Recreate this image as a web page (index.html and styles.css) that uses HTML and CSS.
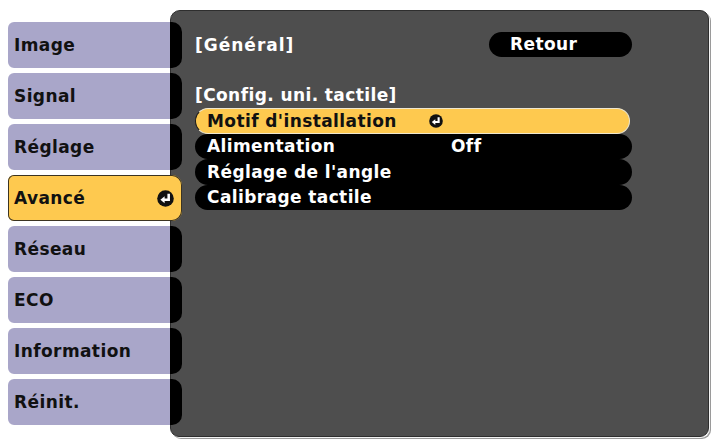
FILE: index.html
```html
<!DOCTYPE html>
<html lang="fr">
<head>
<meta charset="utf-8">
<title>Avancé</title>
<link rel="stylesheet" href="styles.css">
</head>
<body>
<div class="screen">
  <nav class="menu">
    <div class="menu-item">Image</div>
    <div class="menu-item">Signal</div>
    <div class="menu-item">Réglage</div>
    <div class="menu-item selected">Avancé
      <svg class="enter enter-lg" viewBox="0 0 16 16"><circle cx="8" cy="8" r="7.8" fill="#111"/><path d="M11 3.6V9.2H6.4" fill="none" stroke="#fff" stroke-width="2.4"/><path d="M3.2 9.2L7.2 5.9V12.5Z" fill="#fff"/></svg>
    </div>
    <div class="menu-item">Réseau</div>
    <div class="menu-item">ECO</div>
    <div class="menu-item">Information</div>
    <div class="menu-item">Réinit.</div>
  </nav>
  <main class="panel">
    <div class="panel-head">
      <span class="heading">[Général]</span>
      <span class="back">Retour</span>
    </div>
    <div class="section-title">[Config. uni. tactile]</div>
    <div class="rows">
      <div class="row active">
        <span class="label">Motif d'installation</span>
        <svg class="enter" viewBox="0 0 16 16"><circle cx="8" cy="8" r="7.8" fill="#111"/><path d="M11 3.6V9.2H6.4" fill="none" stroke="#fff" stroke-width="2.4"/><path d="M3.2 9.2L7.2 5.9V12.5Z" fill="#fff"/></svg>
      </div>
      <div class="row">
        <span class="label">Alimentation</span>
        <span class="value">Off</span>
      </div>
      <div class="row"><span class="label">Réglage de l'angle</span></div>
      <div class="row"><span class="label">Calibrage tactile</span></div>
    </div>
  </main>
</div>
</body>
</html>
```
FILE: styles.css
```css
html, body {
  margin: 0;
  padding: 0;
  background: #ffffff;
}

body {
  font-family: "DejaVu Sans", "Liberation Sans", sans-serif;
  font-weight: bold;
  font-size: 17px;
  letter-spacing: 0.4px;
}

.screen {
  display: flex;
  align-items: flex-start;
  padding: 10px 0 0 8px;
  width: 712px;
  height: 440px;
  box-sizing: border-box;
}

.menu {
  position: relative;
  z-index: 1;
  display: flex;
  flex-direction: column;
  gap: 5px;
  width: 174px;
  padding-top: 12px;
  margin-right: -12px;
  flex-shrink: 0;
}

.menu-item {
  display: flex;
  align-items: center;
  justify-content: space-between;
  height: 46px;
  box-sizing: border-box;
  padding: 0 8px 0 6px;
  border-radius: 6px 10px 10px 6px;
  background: linear-gradient(to right, #a9a6c9 0, #a9a6c9 162px, #000 162px, #000 100%);
  color: #111;
}

.menu-item.selected {
  background: #fec94f;
  box-shadow: inset 0 0 0 1px #3b3422;
}

.enter {
  width: 14px;
  height: 14px;
  display: block;
  margin-left: -2px;
}

.enter-lg {
  width: 17px;
  height: 17px;
  margin-left: 0;
}

.panel {
  width: 539px;
  height: 427px;
  box-sizing: border-box;
  background: #4e4e4e;
  border: 1px solid #2e2e2e;
  border-radius: 10px 9px 9px 9px;
  box-shadow: 1px 1px 0 #f2f2f2, 2px 2px 0 #9a9a9a;
  padding: 21px 0 0 24px;
  color: #fff;
}

.panel-head {
  display: flex;
  align-items: center;
  justify-content: space-between;
  width: 437px;
  height: 25px;
}

.heading {
  letter-spacing: 1px;
}

.back {
  display: block;
  width: 143px;
  height: 25px;
  line-height: 25px;
  box-sizing: border-box;
  padding-left: 21px;
  background: #000;
  border-radius: 13px;
}

.section-title {
  margin-top: 27px;
  line-height: 22px;
  height: 22px;
}

.rows {
  display: flex;
  flex-direction: column;
  width: 437px;
  margin-top: 2px;
}

.row {
  display: flex;
  align-items: center;
  height: 25.5px;
  box-sizing: border-box;
  padding-left: 12px;
  background: #000;
  border-radius: 13px;
}

.row.active {
  background: #fec94f;
  color: #111;
  border: 1px solid #efe7cf;
  border-left-color: #1a1a1a;
  padding-left: 11px;
  width: 435px;
}

.label {
  width: 224px;
  flex-shrink: 0;
}

.value {
  padding-left: 20px;
}
```
